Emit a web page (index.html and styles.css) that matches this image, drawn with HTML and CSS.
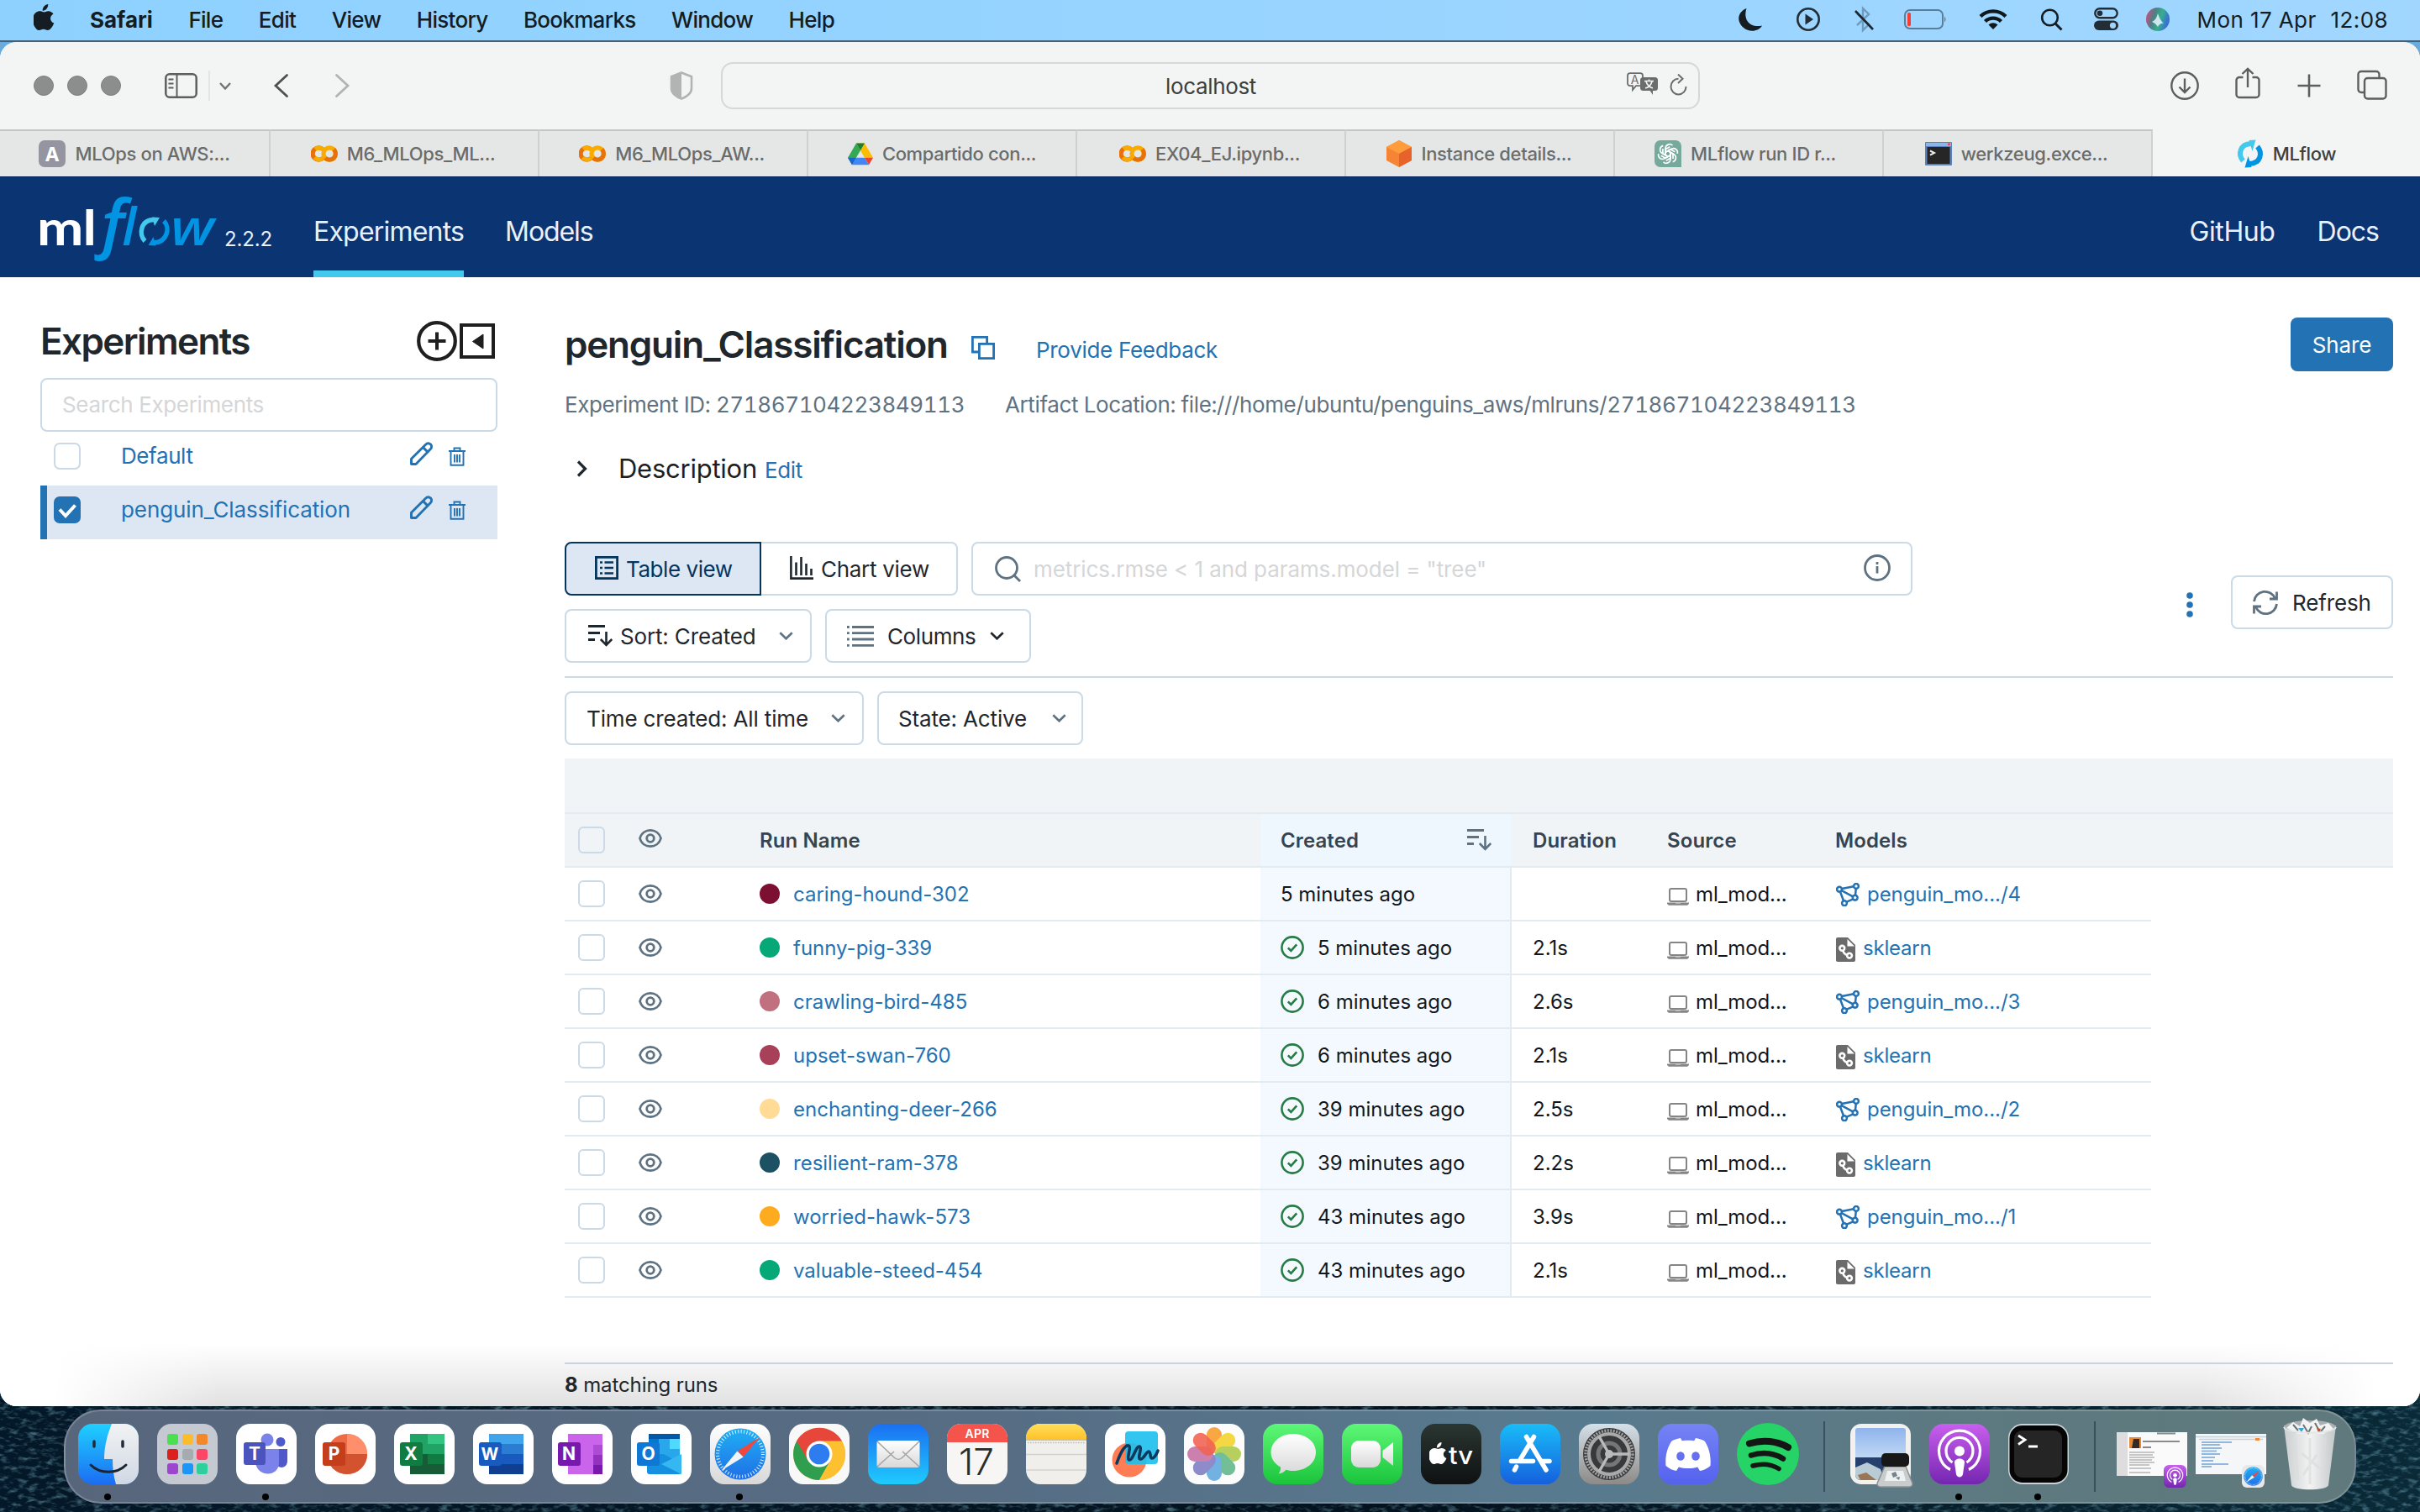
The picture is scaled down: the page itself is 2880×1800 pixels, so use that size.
FILE: index.html
```html
<!DOCTYPE html>
<html lang="en">
<head>
<meta charset="utf-8">
<title>MLflow</title>
<link rel="stylesheet" href="styles.css">
</head>
<body>
<svg class="defs" width="0" height="0" aria-hidden="true">
  <defs>
    <linearGradient id="gFinder" x1="0" y1="0" x2="0" y2="1"><stop offset="0" stop-color="#1fd0ff"/><stop offset="1" stop-color="#1b6df3"/></linearGradient>
    <linearGradient id="gFace" x1="0" y1="0" x2="0" y2="1"><stop offset="0" stop-color="#f2f2f4"/><stop offset="1" stop-color="#cfd8e4"/></linearGradient>
    <linearGradient id="gBlue" x1="0" y1="0" x2="0" y2="1"><stop offset="0" stop-color="#1b6ff2"/><stop offset="1" stop-color="#1fcbfd"/></linearGradient>
    <linearGradient id="gStore" x1="0" y1="0" x2="0" y2="1"><stop offset="0" stop-color="#19bcf8"/><stop offset="1" stop-color="#1560dd"/></linearGradient>
    <linearGradient id="gGreen" x1="0" y1="0" x2="0" y2="1"><stop offset="0" stop-color="#5ef777"/><stop offset="1" stop-color="#1ac43b"/></linearGradient>
    <linearGradient id="gWhite" x1="0" y1="0" x2="0" y2="1"><stop offset="0" stop-color="#ffffff"/><stop offset="1" stop-color="#d8d8d8"/></linearGradient>
    <linearGradient id="gTv" x1="0" y1="0" x2="0" y2="1"><stop offset="0" stop-color="#2b3632"/><stop offset="1" stop-color="#0e1112"/></linearGradient>
    <linearGradient id="gPod" x1="0" y1="0" x2="0" y2="1"><stop offset="0" stop-color="#c95fee"/><stop offset="1" stop-color="#7426b0"/></linearGradient>
    <linearGradient id="gGear" x1="0" y1="0" x2="0" y2="1"><stop offset="0" stop-color="#d5e0e8"/><stop offset="1" stop-color="#8d8a88"/></linearGradient>
    <linearGradient id="gDisc" x1="0" y1="0" x2="0" y2="1"><stop offset="0" stop-color="#7583f5"/><stop offset="1" stop-color="#5562ee"/></linearGradient>
    <linearGradient id="gCompass" x1="0" y1="0" x2="0" y2="1"><stop offset="0" stop-color="#1fb0f4"/><stop offset="1" stop-color="#1f6fe6"/></linearGradient>
    <linearGradient id="gNote" x1="0" y1="0" x2="0" y2="1"><stop offset="0" stop-color="#ffdf5c"/><stop offset="1" stop-color="#ffc32a"/></linearGradient>
    <linearGradient id="gSky" x1="0" y1="0" x2="0" y2="1"><stop offset="0" stop-color="#8fb4ec"/><stop offset="1" stop-color="#c3daf5"/></linearGradient>
    <linearGradient id="gTrash" x1="0" y1="0" x2="1" y2="0"><stop offset="0" stop-color="#c9ced0"/><stop offset=".5" stop-color="#f3f3f3"/><stop offset="1" stop-color="#c2c7c9"/></linearGradient>
    <linearGradient id="gSiri" x1="0" y1="0" x2="1" y2=".3"><stop offset="0" stop-color="#f0407a"/><stop offset=".4" stop-color="#4d7f86"/><stop offset=".7" stop-color="#35b08e"/><stop offset="1" stop-color="#3a6fd8"/></linearGradient>
    <filter id="waves" x="0" y="0" width="100%" height="100%">
      <feTurbulence type="fractalNoise" baseFrequency="0.09 0.2" numOctaves="3" seed="7"/>
      <feColorMatrix values="0 0 0 0 .22  0 0 0 0 .48  0 0 0 0 .60  2.6 0 0 0 -1.25"/>
    </filter>
    <symbol id="apple" viewBox="0 0 25 31"><path d="M17.2 0c.3 2.200-.6 4.200-1.800 5.600-1.200 1.400-3 2.400-4.700 2.200-.3-2 .7-4.100 1.800-5.400C13.700 1 15.700.1 17.200 0zM24.300 22.600c-.7 1.700-1.100 2.400-2 3.900-1.300 2-3.100 4.500-5.400 4.500-2 0-2.500-1.300-5.200-1.300S8.400 31 6.400 31C4.200 31 2.500 28.700 1.200 26.700-2.300 21.200-1.500 12.300 3.300 9.500c1.700-1.100 3.400-1.300 4.900-1.200 1.700.2 3.100 1.200 4.400 1.200 1.200 0 2.500-1 4.700-1.200 2.400-.1 4.900 1.200 6.200 3.200-5.100 3-4.300 9 .8 11.100z"/></symbol>
    <symbol id="colab" viewBox="0 0 32 20"><g fill="none" stroke-width="5.200"><path d="M14.500 5A7.200 7.200 0 1 0 14.500 15" stroke="#e8710a"/><path d="M14.500 5A7.200 7.200 0 0 0 5 4.600" stroke="#f9ab00"/><path d="M4.500 14.500A7.200 7.200 0 0 0 14 15.500" stroke="#f9ab00"/><circle cx="22.200" cy="10" r="7.200" stroke="#f9ab00"/><path d="M17 15.100A7.200 7.200 0 0 0 27.300 4.900" stroke="#e8710a"/></g></symbol>
    <symbol id="check" viewBox="0 0 28 28"><circle cx="14" cy="14" r="12.600" fill="none" stroke="#277c43" stroke-width="2.600"/><path d="M8.800 14.300l3.600 3.600 6.800-7.600" fill="none" stroke="#277c43" stroke-width="2.600"/></symbol>
    <symbol id="eye" viewBox="0 0 28 22"><path d="M1.500 11C5-1.800 23-1.800 26.500 11 23 23.800 5 23.800 1.500 11z" fill="none" stroke="#5f7281" stroke-width="2.800"/><circle cx="14" cy="11" r="4.300" fill="none" stroke="#5f7281" stroke-width="2.800"/></symbol>
    <symbol id="laptop" viewBox="0 0 26 21"><rect x="3" y="1" width="20" height="15" rx="2" fill="none" stroke="#858585" stroke-width="2"/><path d="M0 17.500h26v1.500l-2 1.700H2L0 19z" fill="#858585"/><path d="M10 17.500h6v1h-6z" fill="#ddd"/></symbol>
    <symbol id="model" viewBox="0 0 29 28"><g fill="none" stroke="#2272b4" stroke-width="2.500"><path d="M7 7.100L21 4.300M23.800 6.700l-.8 8M6.600 9.200l13.600 7.200M5 10.700l4 10.600M12.700 22.600l7.700-3.300"/><circle cx="4" cy="7.700" r="2.900"/><circle cx="24" cy="3.900" r="2.900"/><circle cx="22.700" cy="17.700" r="2.900"/><circle cx="10" cy="24.200" r="2.900"/></g></symbol>
    <symbol id="sk" viewBox="0 0 24 29"><path d="M2 0h12l9 9v18a2 2 0 0 1-2 2H2a2 2 0 0 1-2-2V2a2 2 0 0 1 2-2z" fill="#6b6b6b"/><path d="M13.500 2v8.500H22z" fill="#fff"/><g fill="none" stroke="#fff" stroke-width="2.600"><circle cx="7.300" cy="12.800" r="2.900"/><circle cx="16" cy="21.600" r="2.900"/><path d="M8.300 15.500c.6 3.200 1.800 4.500 5 5.200"/></g></symbol>
    <symbol id="pencil" viewBox="0 0 28 28"><path d="M1.500 26.500v-6.200L18.800 2.900a3.900 3.900 0 0 1 5.600 0 3.900 3.900 0 0 1 0 5.600L7 26.500zM15.300 6.400l6 6" fill="none" stroke="#2272b4" stroke-width="2.900" stroke-linejoin="round"/></symbol>
    <symbol id="bin" viewBox="0 0 20 23"><path d="M0 5h20M6.500 5V1.500h7V5M2.500 5v16.700h15V5M7 9v9.500M10 9v9.500M13 9v9.500" fill="none" stroke="#2272b4" stroke-width="1.900"/></symbol>
    <symbol id="caret" viewBox="0 0 17 10"><path d="M1.300 1.300L8.500 8.300l7.200-7" fill="none" stroke="currentColor" stroke-width="2.600"/></symbol>
    <symbol id="sort" viewBox="0 0 29 26"><path d="M0 1.500h20M0 9.500h14M0 17.500h8" stroke="currentColor" stroke-width="2.800" fill="none"/><path d="M21.500 8v15.500M14.800 17l6.700 6.800 6.700-6.800" stroke="currentColor" stroke-width="2.600" fill="none"/></symbol>
    <symbol id="compass" viewBox="0 0 60 60"><circle cx="30" cy="30" r="29.500" fill="url(#gCompass)"/><circle cx="30" cy="30" r="26" fill="none" stroke="#d9f0ff" stroke-width="4" stroke-dasharray="1 2.400"/><path d="M52 11L26.500 26.500l7 7z" fill="#f0483e"/><path d="M8 49l18.500-22.500 7 7z" fill="#f1f4f7"/></symbol>
    <symbol id="pod" viewBox="0 0 72 72"><rect width="72" height="72" rx="17" fill="url(#gPod)"/><g fill="none" stroke="#fff" stroke-width="3.200"><path d="M25 54.500a24.500 24.500 0 1 1 22 0"/><path d="M27.500 46a16 16 0 1 1 17 0"/></g><circle cx="36" cy="32.500" r="6" fill="#fff"/><path d="M30 46c0-6 12-6 12 0l-2 14c-.8 4.500-7.200 4.500-8 0z" fill="#fff"/></symbol>
  </defs>
</svg>

<div class="desktop">
  <header class="menubar">
    <svg class="m-apple" width="25" height="31"><use href="#apple"/></svg>
    <nav class="menus"><b>Safari</b><span>File</span><span>Edit</span><span>View</span><span>History</span><span>Bookmarks</span><span>Window</span><span>Help</span></nav>
    <div class="status">
      <svg width="37" height="48" viewBox="0 0 37 48"><path d="M9.500 11C5 25 14 34.500 28 31.500 24 38.500 13 40 6 34-3 26-1 15 9.500 11z" fill="#151c22"/></svg>
      <svg width="37" height="48" viewBox="0 0 37 48"><circle cx="14" cy="24" r="12.700" fill="none" stroke="#222d36" stroke-width="2.600"/><path d="M10.500 17.500v13l9.500-6.500z" fill="#222d36"/></svg>
      <svg width="27" height="48" viewBox="0 0 27 48"><path d="M3 17l14 13-7 7V11l7 7L3 31" fill="none" stroke="#6f9cbd" stroke-width="2.400"/><path d="M1 14l21 22" stroke="#1b2730" stroke-width="2.600"/></svg>
      <svg width="57" height="48" viewBox="0 0 57 48"><rect x="1" y="13" width="45" height="22" rx="6" fill="none" stroke="#5a7d98" stroke-width="2"/><rect x="4" y="16" width="4" height="16" rx="1.500" fill="#fb3b30"/><path d="M48 20.500q3 3.500 0 7z" fill="#5a7d98"/></svg>
      <svg width="42" height="48" viewBox="0 0 42 48"><g fill="none" stroke="#10181e" stroke-width="4.400"><path d="M2 20.500a21.500 21.500 0 0 1 30 0"/><path d="M7.500 26.500a13.500 13.500 0 0 1 19 0"/></g><path d="M17 36l-5.500-5.500a8 8 0 0 1 11 0z" fill="#10181e"/></svg>
      <svg width="31" height="48" viewBox="0 0 31 48"><circle cx="10.500" cy="22" r="9.300" fill="none" stroke="#151c22" stroke-width="2.600"/><path d="M17 29l7.500 7.500" stroke="#151c22" stroke-width="3"/></svg>
      <svg width="30" height="48" viewBox="0 0 30 48"><rect x="1.300" y="11.300" width="26.400" height="11" rx="5.500" fill="none" stroke="#222d36" stroke-width="2.400"/><circle cx="7" cy="16.800" r="3.300" fill="#222d36"/><rect x="0" y="25.500" width="29" height="11.500" rx="5.700" fill="#222d36"/><circle cx="22.500" cy="31.300" r="3.600" fill="#9fd5fb"/></svg>
      <svg width="29" height="48" viewBox="0 0 29 48"><circle cx="14" cy="24" r="14" fill="url(#gSiri)"/><path d="M7 27C12 25 13 20 14 17c2 6 4 9 7 12-4-1-6 2-7 4-2-3-4-5-7-6z" fill="#e9f3ff" opacity=".85"/></svg>
    </div>
    <div class="clock"><span>Mon 17 Apr</span><span>12:08</span></div>
  </header>

  <main class="window">
    <div class="toolbar">
      <div class="lights"><i></i><i></i><i></i></div>
      <svg class="t-side" width="39" height="30" viewBox="0 0 39 30"><rect x="1.300" y="1.300" width="36.400" height="27.400" rx="4.500" fill="none" stroke="#5d5f5e" stroke-width="2.500"/><path d="M14.500 1v28M4.500 7.500h6M4.500 12.500h6M4.500 17.500h6" stroke="#5d5f5e" stroke-width="2"/></svg>
      <span class="t-line"></span>
      <svg class="t-down" width="14" height="9" viewBox="0 0 14 9"><path d="M1 1l6 6.500L13 1" fill="none" stroke="#707271" stroke-width="2.400"/></svg>
      <svg class="t-back" width="17" height="28" viewBox="0 0 17 28"><path d="M15.500 1.500L2 14l13.500 12.500" fill="none" stroke="#4f5150" stroke-width="2.800" stroke-linecap="round"/></svg>
      <svg class="t-fwd" width="17" height="28" viewBox="0 0 17 28"><path d="M1.500 1.500L15 14 1.500 26.500" fill="none" stroke="#b2b4b3" stroke-width="2.800" stroke-linecap="round"/></svg>
      <svg class="t-shield" width="28" height="34" viewBox="0 0 28 34"><path d="M14 1.500l12 4.700v14C26 26 20 30.500 14 32.500 8 30.500 2 26 2 20.200v-14z" fill="none" stroke="#b2b4b3" stroke-width="2.600"/><path d="M14 1v32C8 31 1.500 26 1.500 20V6z" fill="#b2b4b3"/></svg>
      <div class="url">
        <span>localhost</span>
        <svg class="u-lang" width="38" height="28" viewBox="0 0 38 28"><path d="M4 1.200h12a3 3 0 0 1 3 3v9a3 3 0 0 1-3 3h-5L7 21v-4.800H4a3 3 0 0 1-3-3v-9a3 3 0 0 1 3-3z" fill="none" stroke="#6b6d6c" stroke-width="1.800"/><text x="9.500" y="14" text-anchor="middle" font-size="14" fill="#6b6d6c">A</text><rect x="16" y="6" width="21" height="16" rx="3.500" fill="#6b6d6c"/><path d="M27 21l4 6v-6z" fill="#6b6d6c"/><path d="M21 10.500h11M26.500 8.500v2M23 11c1 4 5 7 8 8M30 11c-1 4-4 7-8 8" stroke="#f3f5f4" stroke-width="1.600" fill="none"/></svg>
        <svg class="u-load" width="21" height="26" viewBox="0 0 21 26"><path d="M10.500 5.800A9 9.300 0 1 0 19.500 15" fill="none" stroke="#6b6d6c" stroke-width="2"/><path d="M10 0.500l5.500 5.300L10 11" fill="none" stroke="#6b6d6c" stroke-width="2"/></svg>
      </div>
      <div class="t-right">
        <svg width="34" height="36" viewBox="0 0 34 36"><circle cx="17" cy="18" r="15.700" fill="none" stroke="#5d5f5e" stroke-width="2.400"/><path d="M17 9.500v16M10.500 19.500l6.500 6.500 6.500-6.500" fill="none" stroke="#5d5f5e" stroke-width="2.400"/></svg>
        <svg width="30" height="38" viewBox="0 0 30 38"><path d="M9.500 12H5a3.500 3.500 0 0 0-3.500 3.500v17A3.500 3.500 0 0 0 5 36h20a3.500 3.500 0 0 0 3.500-3.500v-17A3.500 3.500 0 0 0 25 12h-4.500M15 24V2M8.500 8L15 1.800 21.500 8" fill="none" stroke="#5d5f5e" stroke-width="2.400"/></svg>
        <svg width="28" height="28" viewBox="0 0 28 28"><path d="M14 .5v27M.5 14h27" stroke="#5d5f5e" stroke-width="2.600"/></svg>
        <svg width="36" height="36" viewBox="0 0 36 36"><path d="M9 27H5a3.500 3.500 0 0 1-3.500-3.500v-18A3.500 3.500 0 0 1 5 2h18a3.500 3.500 0 0 1 3.500 3.500V9" fill="none" stroke="#5d5f5e" stroke-width="2.400"/><rect x="9" y="10" width="25.500" height="24.500" rx="3.500" fill="none" stroke="#5d5f5e" stroke-width="2.400"/></svg>
      </div>
    </div>

    <div class="tabs">
      <div class="tab"><svg width="32" height="32" viewBox="0 0 32 32"><rect width="32" height="32" rx="7" fill="#9595a1"/><text x="16" y="25" text-anchor="middle" font-size="23" font-weight="700" fill="#fff">A</text></svg><span>MLOps on AWS:...</span></div>
      <div class="tab"><svg width="32" height="20"><use href="#colab"/></svg><span>M6_MLOps_ML...</span></div>
      <div class="tab"><svg width="32" height="20"><use href="#colab"/></svg><span>M6_MLOps_AW...</span></div>
      <div class="tab t-drive"><svg width="30" height="27" viewBox="0 0 32 28"><path d="M10.700 0h10.600L32 18.500H21.300z" fill="#fbbc04"/><path d="M10.700 0L16 9.200 5.300 27.500 0 18.500z" fill="#34a853"/><path d="M10.700 0h10.600L16 9.200z" fill="#188038"/><path d="M10.700 18.500h10.600L26.700 27.500H5.300z" fill="#4285f4"/><path d="M0 18.500h10.700L5.300 27.500z" fill="#1967d2"/><path d="M21.300 18.500H32L26.700 27.500z" fill="#ea4335"/></svg><span>Compartido con...</span></div>
      <div class="tab"><svg width="32" height="20"><use href="#colab"/></svg><span>EX04_EJ.ipynb...</span></div>
      <div class="tab"><svg width="32" height="32" viewBox="0 0 32 32"><path d="M16 0l15 8v16l-15 8-15-8V8z" fill="#f58534"/><path d="M16 0l15 8-15 8L1 8z" fill="#ff9d3c"/><path d="M31 8v16l-15 8V16z" fill="#e8622b"/></svg><span>Instance details...</span></div>
      <div class="tab t-gpt"><svg width="32" height="32" viewBox="0 0 32 32"><path d="M7 0h18a7 7 0 0 1 7 7v25H7a7 7 0 0 1-7-7V7a7 7 0 0 1 7-7z" fill="#75a99c"/><g fill="none" stroke="#fff" stroke-width="1.700"><g id="petal"><path d="M13 17.500v-8a5 5 0 0 1 8.500-3.300M13 14.300l6-3.500 5.300 3"/></g><use href="#petal" transform="rotate(60 16 16)"/><use href="#petal" transform="rotate(120 16 16)"/><use href="#petal" transform="rotate(180 16 16)"/><use href="#petal" transform="rotate(240 16 16)"/><use href="#petal" transform="rotate(300 16 16)"/></g></svg><span>MLflow run ID r...</span></div>
      <div class="tab"><svg width="32" height="28" viewBox="0 0 32 28"><rect width="32" height="28" rx="1" fill="#5b80bd"/><path d="M1 1h30v4H1z" fill="#8db5e8"/><path d="M27 1.500h3v2.500h-3z" fill="#d9534a"/><rect x="2.500" y="6" width="27" height="20" fill="#262626"/><path d="M6 10.500l5 2.500-5 2.700" fill="none" stroke="#eee" stroke-width="2"/></svg><span>werkzeug.exce...</span></div>
      <div class="tab on"><svg width="32" height="32" viewBox="0 0 32 32"><g fill="none" stroke-width="6"><path d="M7.500 24.500C1 17 3.500 4.500 17 4" stroke="#43c9ed"/><path d="M24.500 7.500C31 15 28.500 27.500 15 28" stroke="#0194e2"/></g><path d="M14.500 0l8-.5L18.500 13z" fill="#43c9ed"/><path d="M17.500 32l-8 .5L13.500 19z" fill="#0194e2"/></svg><span>MLflow</span></div>
    </div>

    <div class="appbar">
      <svg class="logo" width="212" height="86" viewBox="0 0 212 86" role="img" aria-label="mlflow">
        <text x="-3" y="65" font-size="58" fill="#fff" textLength="70" lengthAdjust="spacingAndGlyphs" class="lg-ml">ml</text>
        <g fill="#0194e2" class="lg-fl">
          <text x="66" y="65" font-size="80">ƒ<tspan dx="-11" font-size="62">l</tspan></text>
          <text x="156" y="65" font-size="60" textLength="51" lengthAdjust="spacingAndGlyphs">w</text>
        </g>
        <path d="M125.500 60c-8-8-5-25.500 11-25.500" fill="none" stroke="#43c9ed" stroke-width="5.500"/><path d="M134 31.500l9 .5-6 10z" fill="#43c9ed"/>
        <path d="M148 36c8 8 4 25.500-12 26" fill="none" stroke="#0194e2" stroke-width="5.500"/><path d="M138.500 65.500l-9-.5 6-10z" fill="#0194e2"/>
      </svg>
      <span class="ver">2.2.2</span>
      <a class="nav on">Experiments</a>
      <a class="nav n2">Models</a>
      <a class="nav gh">GitHub</a>
      <a class="nav dc">Docs</a>
    </div>

    <div class="page">
      <aside class="side">
        <div class="side-head">
          <h2>Experiments</h2>
          <svg width="48" height="48" viewBox="0 0 48 48"><circle cx="24" cy="24" r="21.800" fill="none" stroke="#1f1f1f" stroke-width="4.200"/><path d="M24 13.500v21M13.500 24h21" stroke="#1f1f1f" stroke-width="4"/></svg>
          <svg width="42" height="42" viewBox="0 0 42 42"><rect x="2" y="2" width="38" height="38" fill="none" stroke="#1f1f1f" stroke-width="4"/><path d="M28 13v17L15.500 21.500z" fill="#1f1f1f" stroke="#1f1f1f" stroke-linejoin="round"/></svg>
        </div>
        <div class="side-search">Search Experiments</div>
        <div class="exp"><i class="cb"></i><a class="ex-d">Default</a><svg class="pen" width="28" height="28"><use href="#pencil"/></svg><svg width="20" height="23"><use href="#bin"/></svg></div>
        <div class="exp on"><i class="cb"><svg width="32" height="32" viewBox="0 0 32 32"><path d="M7 15.500l7 7.500 11.500-12.500" fill="none" stroke="#fff" stroke-width="4"/></svg></i><a>penguin_Classification</a><svg class="pen" width="28" height="28"><use href="#pencil"/></svg><svg width="20" height="23"><use href="#bin"/></svg></div>
      </aside>

      <section class="main">
        <div class="title">
          <h1>penguin_Classification</h1>
          <svg class="copy" width="28" height="28" viewBox="0 0 28 28"><path d="M8.500 19H1.400V1.400h17.200v6.800" fill="none" stroke="#2272b4" stroke-width="2.800"/><rect x="9.400" y="9.400" width="17.200" height="17.200" fill="none" stroke="#2272b4" stroke-width="2.800"/></svg>
          <a class="fb">Provide Feedback</a>
          <button class="share">Share</button>
        </div>
        <div class="meta"><span class="eid">Experiment ID: 271867104223849113</span><span class="loc">Artifact Location: file:///home/ubuntu/penguins_aws/mlruns/271867104223849113</span></div>
        <div class="desc"><svg width="13" height="20" viewBox="0 0 13 20"><path d="M2 1.500L10.500 10 2 18.500" fill="none" stroke="#1f272d" stroke-width="3.200"/></svg><span>Description</span><a>Edit</a></div>

        <div class="controls">
          <div class="c-left">
            <div class="c-row">
              <div class="seg seg-on"><svg width="28" height="28" viewBox="0 0 28 28"><rect x="1.400" y="1.400" width="25.200" height="25.200" fill="none" stroke="#04355d" stroke-width="2.800"/><path d="M6 7.500h3M6 14h3M6 20.500h3M11.500 7.500H22M11.500 14H22M11.500 20.500H22" stroke="#04355d" stroke-width="2.600"/></svg><span>Table view</span></div>
              <div class="seg seg-off"><svg width="28" height="28" viewBox="0 0 28 28"><path d="M1.400 0v26.600H28M7.500 23V7.500M13.500 23V1M19.500 23V9M25.500 23v-8" fill="none" stroke="#1f272d" stroke-width="2.600"/></svg><span>Chart view</span></div>
              <div class="query"><svg width="32" height="31" viewBox="0 0 32 31"><circle cx="14" cy="14" r="12.500" fill="none" stroke="#5f7281" stroke-width="2.800"/><path d="M23 23l7 7" stroke="#5f7281" stroke-width="2.800"/></svg><span>metrics.rmse &lt; 1 and params.model = "tree"</span><svg class="info" width="32" height="32" viewBox="0 0 32 32"><circle cx="16" cy="16" r="14.500" fill="none" stroke="#5f7281" stroke-width="2.800"/><path d="M16 14v8.500M16 9v3" stroke="#5f7281" stroke-width="2.800"/></svg></div>
            </div>
            <div class="c-row">
              <div class="btn b-sort"><svg width="29" height="26"><use href="#sort"/></svg><span>Sort: Created</span><svg class="car" width="17" height="10"><use href="#caret"/></svg></div>
              <div class="btn b-cols"><svg width="32" height="25" viewBox="0 0 32 25"><path d="M0 1.500h2.800M0 8.700h2.800M0 16h2.800M0 23.300h2.800M6 1.500h26M6 8.700h26M6 16h26M6 23.300h26" stroke="#5f7281" stroke-width="2.800"/></svg><span>Columns</span><svg class="car" width="17" height="10"><use href="#caret"/></svg></div>
            </div>
          </div>
          <svg class="dots" width="8" height="30" viewBox="0 0 8 30"><g fill="#2272b4"><circle cx="4" cy="4" r="3.800"/><circle cx="4" cy="15" r="3.800"/><circle cx="4" cy="26" r="3.800"/></g></svg>
          <div class="btn b-ref"><svg width="30" height="29" viewBox="0 0 30 29"><g fill="none" stroke="#5f7281" stroke-width="2.800"><path d="M1.500 13A13 13 0 0 1 26.500 9.500M28.500 1.500v8.500H20"/><path d="M28.500 16A13 13 0 0 1 3.500 19.500M1.500 27.500V19H10"/></g></svg><span>Refresh</span></div>
        </div>

        <div class="filters">
          <div class="btn b-time"><span>Time created: All time</span><svg class="car" width="17" height="10"><use href="#caret"/></svg></div>
          <div class="btn b-state"><span>State: Active</span><svg class="car" width="17" height="10"><use href="#caret"/></svg></div>
        </div>

        <div class="table">
          <div class="group"></div>
          <div class="row head"><i class="cb"></i><svg class="eye" width="28" height="22"><use href="#eye"/></svg><b>Run Name</b><div class="cr"><b>Created</b><svg width="29" height="26"><use href="#sort"/></svg></div><b class="du">Duration</b><b>Source</b><b>Models</b></div>
          <div class="row"><i class="cb"></i><svg class="eye" width="28" height="22"><use href="#eye"/></svg><div class="run"><i style="background:#7d0f33"></i><a>caring-hound-302</a></div><div class="cr">5 minutes ago</div><span class="du"></span><div class="src"><svg width="26" height="21"><use href="#laptop"/></svg>ml_mod...</div><div class="mo"><svg width="29" height="28"><use href="#model"/></svg><a>penguin_mo.../4</a></div></div>
          <div class="row"><i class="cb"></i><svg class="eye" width="28" height="22"><use href="#eye"/></svg><div class="run"><i style="background:#07a878"></i><a>funny-pig-339</a></div><div class="cr"><svg width="28" height="28"><use href="#check"/></svg>5 minutes ago</div><span class="du">2.1s</span><div class="src"><svg width="26" height="21"><use href="#laptop"/></svg>ml_mod...</div><div class="mo sk"><svg width="24" height="29"><use href="#sk"/></svg><a>sklearn</a></div></div>
          <div class="row"><i class="cb"></i><svg class="eye" width="28" height="22"><use href="#eye"/></svg><div class="run"><i style="background:#c0707e"></i><a>crawling-bird-485</a></div><div class="cr"><svg width="28" height="28"><use href="#check"/></svg>6 minutes ago</div><span class="du">2.6s</span><div class="src"><svg width="26" height="21"><use href="#laptop"/></svg>ml_mod...</div><div class="mo"><svg width="29" height="28"><use href="#model"/></svg><a>penguin_mo.../3</a></div></div>
          <div class="row"><i class="cb"></i><svg class="eye" width="28" height="22"><use href="#eye"/></svg><div class="run"><i style="background:#a9405a"></i><a>upset-swan-760</a></div><div class="cr"><svg width="28" height="28"><use href="#check"/></svg>6 minutes ago</div><span class="du">2.1s</span><div class="src"><svg width="26" height="21"><use href="#laptop"/></svg>ml_mod...</div><div class="mo sk"><svg width="24" height="29"><use href="#sk"/></svg><a>sklearn</a></div></div>
          <div class="row"><i class="cb"></i><svg class="eye" width="28" height="22"><use href="#eye"/></svg><div class="run"><i style="background:#ffdb96"></i><a>enchanting-deer-266</a></div><div class="cr"><svg width="28" height="28"><use href="#check"/></svg>39 minutes ago</div><span class="du">2.5s</span><div class="src"><svg width="26" height="21"><use href="#laptop"/></svg>ml_mod...</div><div class="mo"><svg width="29" height="28"><use href="#model"/></svg><a>penguin_mo.../2</a></div></div>
          <div class="row"><i class="cb"></i><svg class="eye" width="28" height="22"><use href="#eye"/></svg><div class="run"><i style="background:#1b5162"></i><a>resilient-ram-378</a></div><div class="cr"><svg width="28" height="28"><use href="#check"/></svg>39 minutes ago</div><span class="du">2.2s</span><div class="src"><svg width="26" height="21"><use href="#laptop"/></svg>ml_mod...</div><div class="mo sk"><svg width="24" height="29"><use href="#sk"/></svg><a>sklearn</a></div></div>
          <div class="row"><i class="cb"></i><svg class="eye" width="28" height="22"><use href="#eye"/></svg><div class="run"><i style="background:#ffab1f"></i><a>worried-hawk-573</a></div><div class="cr"><svg width="28" height="28"><use href="#check"/></svg>43 minutes ago</div><span class="du">3.9s</span><div class="src"><svg width="26" height="21"><use href="#laptop"/></svg>ml_mod...</div><div class="mo"><svg width="29" height="28"><use href="#model"/></svg><a>penguin_mo.../1</a></div></div>
          <div class="row"><i class="cb"></i><svg class="eye" width="28" height="22"><use href="#eye"/></svg><div class="run"><i style="background:#07a878"></i><a>valuable-steed-454</a></div><div class="cr"><svg width="28" height="28"><use href="#check"/></svg>43 minutes ago</div><span class="du">2.1s</span><div class="src"><svg width="26" height="21"><use href="#laptop"/></svg>ml_mod...</div><div class="mo sk"><svg width="24" height="29"><use href="#sk"/></svg><a>sklearn</a></div></div>
        </div>
        <div class="foot"><b>8</b> matching runs</div>
      </section>
    </div>
  </main>

  <svg class="sea" width="2880" height="160"><rect width="2880" height="160" filter="url(#waves)"/></svg>

  <footer class="dock">
    <svg viewBox="0 0 72 72"><rect width="72" height="72" rx="17" fill="url(#gFinder)"/><path d="M40 0C35 12 31 27 31 42h10c0 10 1 20 4 30h10a17 17 0 0 0 17-17V17A17 17 0 0 0 55 0z" fill="url(#gFace)"/><path d="M19 21v6M53 21v6" stroke="#222b38" stroke-width="3.500" stroke-linecap="round"/><path d="M15 49c11 11 31 11 42 0" fill="none" stroke="#1c2430" stroke-width="3" stroke-linecap="round"/><circle cx="35" cy="87" r="4"/></svg>
    <svg viewBox="0 0 72 72"><rect width="72" height="72" rx="17" fill="#c5cad2"/><g><rect x="12" y="12" width="13" height="13" rx="3" fill="#4be04f"/><rect x="30" y="12" width="13" height="13" rx="3" fill="#fdbc2c"/><rect x="47" y="12" width="13" height="13" rx="3" fill="#f5872b"/><rect x="12" y="30" width="13" height="13" rx="3" fill="#dd1f1d"/><rect x="30" y="30" width="13" height="13" rx="3" fill="#a5acb0"/><rect x="47" y="30" width="13" height="13" rx="3" fill="#fd4566"/><rect x="12" y="47" width="13" height="13" rx="3" fill="#9c46d0"/><rect x="30" y="47" width="13" height="13" rx="3" fill="#1b96f7"/><rect x="47" y="47" width="13" height="13" rx="3" fill="#2fcf9d"/></g></svg>
    <svg viewBox="0 0 72 72"><rect width="72" height="72" rx="17" fill="#fff"/><circle cx="37" cy="19" r="7.500" fill="#7b83eb"/><circle cx="53" cy="21.500" r="5.500" fill="#5059c9"/><path d="M46 30h15v14c0 10-12 10-13 3z" fill="#5059c9"/><path d="M23 30h28v16c0 18-26 18-28 0z" fill="#7b83eb"/><rect x="9" y="22" width="26" height="27" rx="3" fill="#4b53bc"/><text x="22" y="43" text-anchor="middle" font-size="21" font-weight="700" fill="#fff">T</text><circle cx="35" cy="87" r="4"/></svg>
    <svg viewBox="0 0 72 72"><rect width="72" height="72" rx="17" fill="#fff"/><circle cx="38" cy="36" r="24" fill="#ed6c47"/><path d="M38 12a24 24 0 0 1 24 24H38z" fill="#ff8f6b"/><path d="M62 36a24 24 0 0 1-48 0z" fill="#d35230"/><rect x="9" y="22" width="27" height="28" rx="3" fill="#c43e1c"/><text x="22.500" y="43" text-anchor="middle" font-size="21" font-weight="700" fill="#fff">P</text></svg>
    <svg viewBox="0 0 72 72"><rect width="72" height="72" rx="17" fill="#fff"/><path d="M19 12h21v12H19z" fill="#21a366"/><path d="M40 12h20v12H40z" fill="#33c481"/><path d="M19 24h41v12H19z" fill="#21a366"/><path d="M19 36h21v12H19z" fill="#185c37"/><path d="M40 36h20v12H40z" fill="#107c41"/><path d="M19 48h41v12H19z" fill="#185c37"/><rect x="7" y="22" width="27" height="28" rx="3" fill="#107c41"/><text x="20" y="43" text-anchor="middle" font-size="21" font-weight="700" fill="#fff">X</text></svg>
    <svg viewBox="0 0 72 72"><rect width="72" height="72" rx="17" fill="#fff"/><path d="M19 12h41v12H19z" fill="#41a5ee"/><path d="M19 24h41v12H19z" fill="#2b7cd3"/><path d="M19 36h41v12H19z" fill="#185abd"/><path d="M19 48h41v12H19z" fill="#103f91"/><rect x="7" y="22" width="27" height="28" rx="3" fill="#185abd"/><text x="20" y="43" text-anchor="middle" font-size="20" font-weight="700" fill="#fff">W</text></svg>
    <svg viewBox="0 0 72 72"><rect width="72" height="72" rx="17" fill="#fff"/><path d="M19 12h41v48H19z" fill="#ca64ea"/><path d="M49 25h11v12H49z" fill="#ae4bd5"/><path d="M49 37h11v12H49z" fill="#9332bf"/><path d="M49 49h11v11H49z" fill="#7719aa"/><rect x="7" y="22" width="27" height="28" rx="3" fill="#7719aa"/><text x="20" y="43" text-anchor="middle" font-size="21" font-weight="700" fill="#fff">N</text></svg>
    <svg viewBox="0 0 72 72"><rect width="72" height="72" rx="17" fill="#fff"/><path d="M21 12h37v12H21z" fill="#0358a7"/><path d="M21 18h12v18H21z" fill="#0078d4"/><path d="M33 18h13v24H33z" fill="#28a8ea"/><path d="M46 18h12v12H46z" fill="#50d9ff"/><path d="M46 30h12v12H46z" fill="#28a8ea"/><path d="M19 36h20l21 12v9a3 3 0 0 1-3 3H22a3 3 0 0 1-3-3z" fill="#1490df"/><path d="M60 36v24L36 48z" fill="#35b8f1"/><rect x="7" y="22" width="27" height="28" rx="3" fill="#0f78d4"/><text x="20.500" y="43" text-anchor="middle" font-size="21" font-weight="700" fill="#fff">O</text></svg>
    <svg viewBox="0 0 72 72"><rect width="72" height="72" rx="17" fill="url(#gWhite)"/><use href="#compass" x="5" y="5" width="62" height="62"/><circle cx="35" cy="87" r="4"/></svg>
    <svg viewBox="0 0 72 72"><rect width="72" height="72" rx="17" fill="#f8f8f8"/><circle cx="36" cy="36" r="31" fill="#fcc031"/><path d="M36 36L9.200 20.500A31 31 0 0 0 36 67l13.400-23.300z" fill="#2f9e4f"/><path d="M36 36h26l1-15.500a31 31 0 0 0-54 0L22.600 43.700z" fill="#e7473a"/><path d="M36 20.500h27a31 31 0 0 1-27 46.500l13-23z" fill="#fcc031"/><circle cx="36" cy="36" r="15.500" fill="#fff"/><circle cx="36" cy="36" r="12.300" fill="#2e7df0"/></svg>
    <svg viewBox="0 0 72 72"><rect width="72" height="72" rx="17" fill="url(#gBlue)"/><rect x="10.500" y="20" width="51" height="32" rx="3" fill="url(#gWhite)"/><path d="M11 51l20-18M61 51L41 33M11 21l20 19c3 3 7 3 10 0l20-19" fill="none" stroke="#a5a5a8" stroke-width="1.600"/></svg>
    <svg viewBox="0 0 72 72"><rect width="72" height="72" rx="17" fill="#f7f6f5"/><path d="M0 22v-5A17 17 0 0 1 17 0h38a17 17 0 0 1 17 17v5z" fill="#f5544d"/><text x="36" y="17" text-anchor="middle" font-size="14" font-weight="600" fill="#fff" textLength="29">APR</text><text x="35" y="61" text-anchor="middle" font-size="43" font-weight="300" fill="#2b2b2b" textLength="42" lengthAdjust="spacingAndGlyphs">17</text></svg>
    <svg viewBox="0 0 72 72"><rect width="72" height="72" rx="17" fill="#f1efeb"/><path d="M0 18v-1A17 17 0 0 1 17 0h38a17 17 0 0 1 17 17v1z" fill="url(#gNote)"/><path d="M0 19h72" stroke="#b9b2a2" stroke-width="1.500"/><path d="M2 22.500h68" stroke="#bbb" stroke-width="1.600" stroke-dasharray="1.500 1.500"/><path d="M0 36.500h72M0 55h72" stroke="#d3d1ce" stroke-width="1.600"/></svg>
    <svg viewBox="0 0 72 72"><rect width="72" height="72" rx="17" fill="#fff"/><ellipse cx="29" cy="43" rx="20.500" ry="20.500" fill="#ff7d54"/><rect x="24" y="9" width="39" height="39" rx="4" fill="#1fc0ee" opacity=".92"/><path d="M14 47c5-14 10-22 14-21s-3 16 1 17 8-17 12-16-3 14 1 15 7-9 10-9 1 8 4 8 5-4 7-9" fill="none" stroke="#0c3a5e" stroke-width="3.600" stroke-linecap="round"/></svg>
    <svg viewBox="0 0 72 72"><rect width="72" height="72" rx="17" fill="#fcfcfc"/><g opacity=".88"><rect x="27" y="4" width="18" height="31" rx="9" fill="#f99b2b"/><rect x="27" y="4" width="18" height="31" rx="9" fill="#f3d42a" transform="rotate(45 36 36)"/><rect x="27" y="4" width="18" height="31" rx="9" fill="#aecb48" transform="rotate(90 36 36)"/><rect x="27" y="4" width="18" height="31" rx="9" fill="#5fb78a" transform="rotate(135 36 36)"/><rect x="27" y="4" width="18" height="31" rx="9" fill="#5fa8e0" transform="rotate(180 36 36)"/><rect x="27" y="4" width="18" height="31" rx="9" fill="#7f7cc4" transform="rotate(225 36 36)"/><rect x="27" y="4" width="18" height="31" rx="9" fill="#c66fa5" transform="rotate(270 36 36)"/><rect x="27" y="4" width="18" height="31" rx="9" fill="#f04f3c" transform="rotate(315 36 36)" opacity=".9"/></g></svg>
    <svg viewBox="0 0 72 72"><rect width="72" height="72" rx="17" fill="url(#gGreen)"/><path d="M36 12c15 0 27 9.500 27 22S51 56 36 56c-3 0-6-.4-8.500-1.200C25.500 57 22.500 59 18.500 59.500c2-2.500 2.800-5 2.500-8C13.500 47.500 9.500 41 9.500 34 9.500 21.500 21 12 36 12z" fill="url(#gWhite)"/></svg>
    <svg viewBox="0 0 72 72"><rect width="72" height="72" rx="17" fill="url(#gGreen)"/><rect x="11" y="20" width="35" height="32" rx="9" fill="url(#gWhite)"/><path d="M48.500 32L61 22v28L48.500 40z" fill="url(#gWhite)"/></svg>
    <svg viewBox="0 0 72 72"><rect width="72" height="72" rx="17" fill="url(#gTv)"/><use href="#apple" x="10" y="22" width="21" height="26" fill="#fff"/><text x="33" y="48" font-size="29" font-weight="500" fill="#fff" textLength="29" lengthAdjust="spacingAndGlyphs">tv</text></svg>
    <svg viewBox="0 0 72 72"><rect width="72" height="72" rx="17" fill="url(#gStore)"/><g fill="none" stroke="#fff" stroke-width="5.500" stroke-linecap="round"><path d="M40.500 15.500L24.500 42M17.500 55l2-4M31.500 15.500L55 55M13.500 44.500h26M50 44.500h9"/></g></svg>
    <svg viewBox="0 0 72 72"><rect width="72" height="72" rx="17" fill="url(#gGear)"/><circle cx="36" cy="36" r="31" fill="#393939"/><circle cx="36" cy="36" r="28" fill="none" stroke="#9fa0a1" stroke-width="3.500" stroke-dasharray="2 1.500"/><circle cx="36" cy="36" r="24" fill="none" stroke="#a9aaab" stroke-width="4"/><circle cx="36" cy="36" r="13" fill="none" stroke="#757677" stroke-width="5"/><g stroke="#b9babb" stroke-width="3.500"><path d="M36 36h24M36 36L24 15M36 36L24 57"/></g><circle cx="36" cy="36" r="5" fill="#b9babb"/></svg>
    <svg viewBox="0 0 72 72"><rect width="72" height="72" rx="17" fill="url(#gDisc)"/><path d="M27 17c-5 .8-9 2.500-11 4-5 8-7.500 18-6.500 29 4 3.500 8.500 5.500 12.500 6l2.800-4.500c7 2 15.400 2 22.400 0L50 56c4-.5 8.500-2.500 12.500-6 1-11-1.500-21-6.500-29-2-1.500-6-3.200-11-4l-1.800 3.300c-4.600-.6-9.800-.6-14.400 0z" fill="#fff"/><ellipse cx="27" cy="38.500" rx="4.800" ry="5.300" fill="#6470f0"/><ellipse cx="45" cy="38.500" rx="4.800" ry="5.300" fill="#6470f0"/></svg>
    <svg viewBox="0 0 72 72"><circle cx="37" cy="36" r="37" fill="#25d366"/><g fill="none" stroke="#131615" stroke-linecap="round"><path d="M15 23.500c16-5 33-3 46 4.500" stroke-width="8"/><path d="M17 37.500c13-4 27-2.500 38 4" stroke-width="6.500"/><path d="M19 50c11-3 22-2 31 3.500" stroke-width="5.500"/></g></svg>
    <span class="sep s1"></span>
    <svg viewBox="0 0 72 72"><rect width="72" height="72" rx="13" fill="#f2f1ee"/><path d="M6 8a3 3 0 0 1 3-3h54a3 3 0 0 1 3 3v34H6z" fill="url(#gSky)"/><path d="M6 40h60v27H12a6 6 0 0 1-6-6z" fill="#25406e"/><path d="M6 52l14-6 16 8 4 13H12a6 6 0 0 1-6-6z" fill="#b9cbd5"/><path d="M9 61l10-3 12 9H12z" fill="#9a7655"/><path d="M41 51h25l8 20a4 4 0 0 1-4 4H36a4 4 0 0 1-4-4z" fill="#c9cccd" stroke="#8d9294" stroke-width="1.500"/><path d="M44 56h19l3 12H41z" fill="#eef1f2"/><path d="M49 59l5-2 2 5-5 2zM54 64l5-1-1 4z" fill="#76838c"/><rect x="37" y="35" width="33" height="16" rx="5" fill="#171717"/></svg>
    <svg viewBox="0 0 72 72"><use href="#pod" width="72" height="72"/><circle cx="35" cy="87" r="4"/></svg>
    <svg viewBox="0 0 72 72"><rect width="72" height="72" rx="17" fill="#c9d2d7"/><rect x="1.500" y="2" width="69" height="68" rx="15" fill="#050505"/><rect x="7" y="8" width="57" height="56" rx="9" fill="#252525"/><path d="M12 14l8 5-8 5.500M24 27h11" fill="none" stroke="#fff" stroke-width="2.800"/><circle cx="35" cy="87" r="4"/></svg>
    <span class="sep s2"></span>
    <svg class="d-win" viewBox="0 0 84 72"><rect y="10" width="84" height="52" fill="#fafafa"/><path d="M0 10h13v52H0z" fill="#dedcdd"/><rect x="15" y="16" width="14" height="13" fill="#e48a3a"/><path d="M20 18h7v11h-9z" fill="#332b28"/><path d="M31 21h44M31 28h10M48 11.500h22" stroke="#8a8a8a" stroke-width="2"/><path d="M15 34h30M15 37h28M15 40h30M15 43h27M15 46h30M15 49h24M15 53h26M15 58h25" stroke="#b5b5b5" stroke-width="1.500"/><use href="#pod" x="56" y="49" width="27" height="27"/></svg>
    <svg class="d-win" viewBox="0 0 84 72"><rect y="12" width="84" height="48" fill="#f4f6f8"/><path d="M0 15.500h84M4 18.500h76" stroke="#c7d3d8" stroke-width="1.500"/><path d="M7 22h36M7 25h22M7 29h24M7 32.500h18M7 36h22M7 40h16M7 44h14M7 48h32M7 51h12" stroke="#8fb7e0" stroke-width="2"/><rect x="71" y="17" width="5" height="3" fill="#f08a3c"/><rect x="55" y="49" width="27" height="27" rx="6" fill="#e9e9ea"/><use href="#compass" x="57" y="51" width="23" height="23"/></svg>
    <svg class="d-trash" viewBox="0 0 64 84"><path d="M1 7l9 71c1 7 43 7 44 0L63 7z" fill="url(#gTrash)"/><path d="M14 22l4 50M32 22v55M50 22l-4 50M22 40l22 18M24 66l16-24" stroke="#dcdcdc" stroke-width="3" opacity=".7"/><ellipse cx="32" cy="9" rx="31" ry="8" fill="#aab0b3"/><path d="M4 10l8-7 8 5 4-10 8 6 8-5 4 8 10-3 6 7-12 6H18z" fill="#f3f3f3"/><path d="M24 6l6 10 4-8M38 4l6 11M12 6l6 7M50 8l-5 6" stroke="#6d7477" stroke-width="2" fill="none"/><path d="M18 10l7 0-3 5z" fill="#35a7d8"/><path d="M40 10l5 1-3 5z" fill="#c2532c"/><path d="M1 9c3 9 59 9 62 0" fill="none" stroke="#e3e6e7" stroke-width="2"/></svg>
  </footer>
</div>
</body>
</html>
```
FILE: styles.css
```css
* { box-sizing: border-box; }
body { margin: 0; font-family: Inter, "Liberation Sans", sans-serif; font-size: 26px; color: #1f272d; }
svg { display: block; flex: none; overflow: visible; }
svg text { font-family: Inter, sans-serif; }
h1, h2 { margin: 0; font-size: 44px; font-weight: 600; line-height: 1; }
a { color: #2272b4; }
.defs { position: absolute; }

.desktop {
  position: relative;
  width: 2880px; height: 1800px;
  overflow: hidden;
  display: flex; flex-direction: column;
  background: linear-gradient(90deg, #031828, #04121e 60%, #0a2a38);
}

/* menu bar */
.menubar {
  height: 50px; padding: 0 38px 2px 40px;
  display: flex; align-items: center;
  background: linear-gradient(90deg, #8ed1ff, #a1d7ff);
  border-bottom: 2px solid #41617c;
  letter-spacing: -.7px; color: #141d24;
  box-shadow: 0 30px 0 #6aabdc;
}
.m-apple { fill: #141d24; margin-top: -5px; }
.menus { display: flex; gap: 42.5px; margin-left: 42px; }
.menus span { font-weight: 450; }
.menus b { letter-spacing: 0; }
.status { display: flex; gap: 32px; margin-left: auto; }
.clock { display: flex; gap: 17px; margin-left: 32px; letter-spacing: .4px; }

/* browser window */
.window {
  position: relative; z-index: 1; height: 1624px; flex: none;
  display: flex; flex-direction: column;
  background: #fff; border-radius: 20px; overflow: hidden;
}
.toolbar { height: 104px; background: #f3f5f4; display: flex; align-items: center; padding: 0 39px 0 40px; flex: none; }
.lights { display: flex; gap: 16px; }
.lights i { width: 24px; height: 24px; border-radius: 50%; background: #8c8e8d; border: 1px solid #7e807f; }
.t-side { margin-left: 52px; }
.t-line { width: 2px; height: 36px; background: #e3e5e4; margin-left: 13px; }
.t-down { margin-left: 11px; }
.t-back { margin-left: 51px; }
.t-fwd { margin-left: 56px; }
.t-shield { margin-left: 381px; }
.url {
  width: 1165px; height: 56px; margin-left: 33px; padding: 0 12px 0 527px;
  display: flex; align-items: center;
  border: 2px solid #d6d8d7; border-radius: 14px;
  letter-spacing: -.34px; color: #3d3f3e;
}
.url span { width: 549px; }
.u-load { margin-left: 13px; margin-top: -3px; }
.u-lang { margin-top: -4px; }
.t-right { margin-left: auto; display: flex; align-items: center; gap: 43.500px; }
.t-right svg:nth-child(2) { margin-top: -6px; }
.t-right svg:nth-child(4) { margin-top: -2px; }

.tabs { height: 56px; display: flex; flex: none; background: #e5e7e6; }
.tab {
  width: 320px; padding-right: 3px; display: flex; align-items: center; justify-content: center; gap: 11px;
  border-top: 2px solid #c5c7c6; border-right: 2px solid #cfd1d0;
  font-size: 22px; font-weight: 500; color: #6a6c6b; letter-spacing: -.35px; white-space: nowrap;
}
.tab:first-child { width: 322px; padding-right: 0; }
.tab.t-drive { padding-right: 0; }
.tab.t-gpt { padding-right: 8px; }
.tab.on { background: #f3f5f4; border-color: #f3f5f4; color: #3e403f; flex: 1; border-right: 0; padding-right: 0; }

/* MLflow header */
.appbar {
  height: 120px; flex: none; padding: 0 49px 0 47px;
  display: flex; align-items: center;
  background: #0b3472; border-top: 1px solid #04205a;
  font-size: 32px; letter-spacing: -.8px;
}
.logo { margin-top: -2px; }
.lg-ml { font-family: Lato, sans-serif; font-weight: 700; }
.lg-fl text { font-family: "Open Sans", sans-serif; font-style: italic; font-weight: 600; }
.ver { margin-left: 8px; margin-top: 27px; font-size: 24px; letter-spacing: -.15px; color: #e8f1fb; }
.nav { color: #e8f1fb; height: 119px; padding-top: 12px; line-height: 105px; }
.nav.on { margin-left: 49px; border-bottom: 8px solid #43c9ed; }
.n2 { margin-left: 49px; letter-spacing: -1.1px; }
.gh { margin-left: auto; letter-spacing: -.4px; }
.dc { margin-left: 50px; letter-spacing: -1px; }

/* page body */
.page { flex: 1; display: flex; padding: 0 32px 0 48px; background: linear-gradient(#fff 0, #fff 1270px, #e1e1e1 1344px); position: relative; }
.page::before, .page::after {
  content: ""; position: absolute; bottom: 0; width: 260px; height: 90px;
}
.page::before { left: 0; background: linear-gradient(90deg, #fff 25%, rgba(255,255,255,0)); }
.page::after { right: 0; background: linear-gradient(270deg, #fff 20%, rgba(255,255,255,0)); }

.side { width: 544px; padding-top: 52px; position: relative; z-index: 1; }
.side-head { display: flex; align-items: center; height: 48px; padding: 0 3px 0 0; }
.side-head h2 { flex: 1; letter-spacing: -1.6px; }
.side-head svg + svg { margin-left: 3px; }
.side-search {
  margin-top: 20px; height: 64px; padding: 0 0 1px 24px;
  display: flex; align-items: center;
  border: 2px solid #cbdae6; border-radius: 8px;
  color: #d5d6d7; letter-spacing: -.35px;
}
.exp { height: 64px; padding: 0 38px 6px 16px; display: flex; align-items: center; letter-spacing: -.1px; }
.exp a { margin: -1px 0 0 48px; flex: 1; }
.exp .ex-d { letter-spacing: -.4px; }
.exp .pen { margin: -6px 18px 0 0; }
.exp.on { background: #dce7f3; border-left: 8px solid #2272b4; padding-left: 8px; }
.exp.on .cb { background: #2272b4; border: 0; }
.cb { display: block; width: 32px; height: 32px; border: 2px solid #cbdae6; border-radius: 7px; flex: none; }

.main { margin-left: 80px; flex: 1; display: flex; flex-direction: column; position: relative; z-index: 1; }
.title { height: 64px; margin-top: 48px; display: flex; align-items: center; }
.title h1 { width: 484px; letter-spacing: -1.2px; }
.copy { margin-top: 8px; }
.fb { margin: 13px auto 0 49px; letter-spacing: -.3px; }
.share { width: 122px; height: 64px; border: 0; border-radius: 8px; background: #2272b4; color: #fff; font: inherit; letter-spacing: -.1px; padding: 0; }
.meta { height: 40px; margin-top: 19px; margin-bottom: 1px; display: flex; align-items: center; color: #5f7281; white-space: nowrap; }
.meta span { font-variant-numeric: tabular-nums; }
.eid { width: 524px; letter-spacing: -.4px; }
.loc { letter-spacing: -.38px; }
.desc { height: 40px; margin-top: 36px; padding-left: 14px; display: flex; align-items: center; color: #1f1f1f; }
.desc span { margin-left: 37px; font-size: 31px; letter-spacing: -.25px; margin-top: -1px; }
.desc a { margin: 3px 0 0 9px; letter-spacing: -.34px; }

.controls { margin-top: 67px; padding-bottom: 16px; border-bottom: 2px solid #cbdae6; display: flex; align-items: center; }
.c-left { display: flex; flex-direction: column; gap: 16px; }
.c-row { display: flex; height: 64px; }
.seg { width: 234px; display: flex; align-items: center; padding-left: 34px; gap: 9px; border: 2px solid; letter-spacing: -.45px; }
.seg svg { margin-top: -2px; }
.seg-on { border-color: #04355d; background: #dce7f3; color: #04355d; border-radius: 8px 0 0 8px; }
.seg-off { border-color: #cbdae6; border-left: 0; border-radius: 0 8px 8px 0; letter-spacing: -.29px; }
.query { width: 1120px; margin-left: 16px; padding: 0 24px 0 26px; display: flex; align-items: center; border: 2px solid #cbdae6; border-radius: 8px; color: #d5d6d7; }
.query span { margin-left: 14px; letter-spacing: -.08px; }
.info { margin-left: auto; margin-top: -2px; }
.btn { height: 64px; display: flex; align-items: center; border: 2px solid #cbdae6; border-radius: 8px; letter-spacing: -.15px; white-space: nowrap; }
.btn .car { margin-left: auto; color: #5f7281; }
.b-sort { width: 294px; padding: 0 20px 0 26px; gap: 9px; }
.b-cols { width: 245px; padding: 0 30px 0 24px; margin-left: 16px; gap: 16px; letter-spacing: -.4px; }
.b-cols .car { color: #1f272d; }
.b-cols span { margin-right: -17px; }
.dots { margin-left: auto; margin-top: 6px; }
.b-ref { width: 193px; margin-left: 45px; padding-left: 24px; gap: 17px; }
.filters { margin-top: 16px; display: flex; gap: 16px; }
.b-time { width: 356px; padding: 0 20px 0 24px; }
.b-state { width: 245px; padding: 0 18px 0 23px; }

/* runs table */
.table { margin-top: 16px; font-size: 24px; color: #11171c; }
.group { height: 66px; background: #f0f4f7; border-bottom: 2px solid #e3eaf0; }
.row {
  width: 1888px; height: 64px;
  display: grid; grid-template-columns: 88px 144px 596px 299px 185px 200px 1fr;
  align-items: center; border-bottom: 2px solid #e3eaf0;
}
.row > .cb { margin-left: 16px; border-radius: 6px; }
.row b { font-weight: 600; letter-spacing: .1px; }
.head { width: auto; background: #f0f4f7; color: #37444f; }
.head .eye { margin-top: -4px; }
.run { display: flex; align-items: center; }
.run i { width: 24px; height: 24px; border-radius: 50%; margin-right: 16px; }
.cr { height: 62px; padding-left: 24px; display: flex; align-items: center; background: #f4f9ff; border-right: 2px solid #e3eaf0; }
.cr svg { margin-right: 16px; }
.head .cr { background: #eef6fe; border: 0; justify-content: space-between; color: #37444f; }
.head .cr svg { margin-right: 24px; color: #5f7281; }
.du { padding-left: 25px; }
.src { display: flex; align-items: center; gap: 8px; letter-spacing: -.1px; }
.src svg { margin-top: 7px; }
.mo { display: flex; align-items: center; gap: 8px; padding-left: 1px; letter-spacing: -.06px; }
.mo svg { margin-top: 2px; }
.mo.sk { letter-spacing: -.2px; }
.mo.sk svg { margin-top: 4px; }
.foot { margin-top: auto; height: 52px; border-top: 2px solid #c8d5e1; line-height: 50px; font-size: 24px; letter-spacing: -.1px; }
.foot b { font-weight: 700; }

/* wallpaper and dock */
.sea { position: absolute; left: 0; bottom: 0; z-index: 0; opacity: .5; }
.dock {
  position: relative; z-index: 1;
  width: 2728px; height: 112px; margin: 4px 0 0 76px; padding: 17px 0 0 15px;
  display: flex; gap: 22px;
  border-radius: 44px; border: 2px solid rgba(255,255,255,.2);
  background: linear-gradient(90deg, #58667c, #566d84 40%, #587a8f 65%, #5d7980 85%, #60797c);
}
.dock > svg { width: 72px; height: 72px; margin-top: -2px; }
.sep { width: 2px; height: 84px; background: #37505c; }
.s1 { margin: -5px -11px 0 9px; }
.s1 + svg { margin-left: 19px; }
.s2 { margin: -5px -17px 0 8px; }
.s2 + svg { margin-left: 20px; }
.dock > .d-win { width: 84px; margin-right: -12px; }
.dock > .d-win + .d-win { margin-right: -2px; }
.dock > .d-trash { width: 64px; height: 84px; margin-top: -7px; }
```
